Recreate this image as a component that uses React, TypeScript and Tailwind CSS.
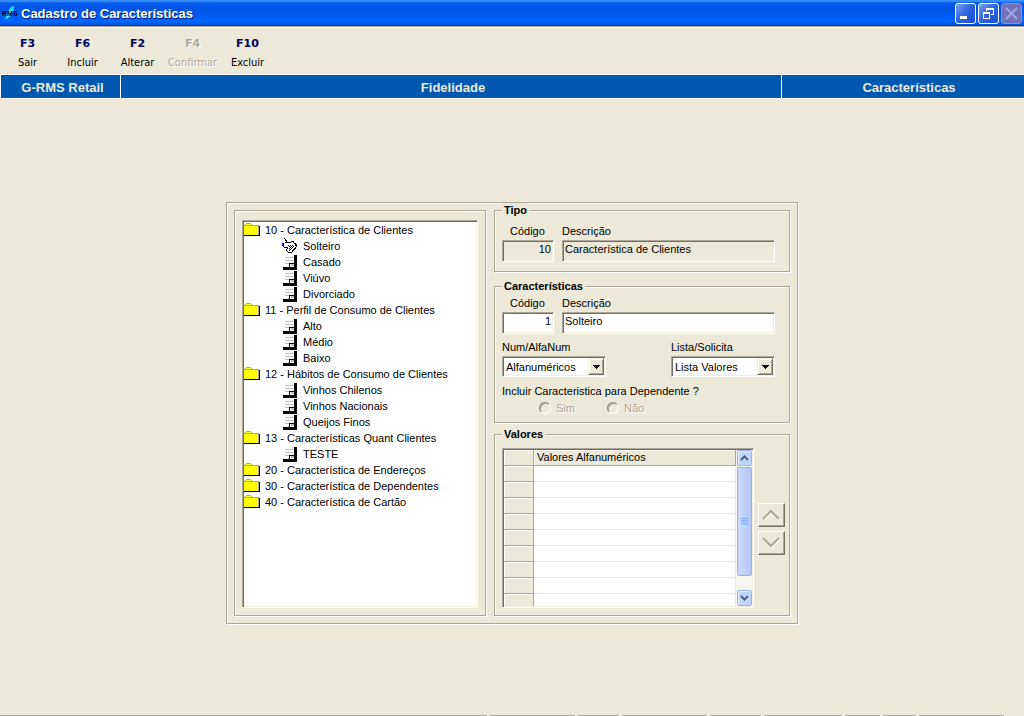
import type { ReactNode } from "react";

type Action = { key: string; label: string; disabled?: boolean };

const actions: Action[] = [
  { key: "F3", label: "Sair" },
  { key: "F6", label: "Incluir" },
  { key: "F2", label: "Alterar" },
  { key: "F4", label: "Confirmar", disabled: true },
  { key: "F10", label: "Excluir" },
];

const tree = [
  { name: "10 - Característica de Clientes", items: ["Solteiro", "Casado", "Viúvo", "Divorciado"] },
  { name: "11 - Perfil de Consumo de Clientes", items: ["Alto", "Médio", "Baixo"] },
  { name: "12 - Hábitos de Consumo de Clientes", items: ["Vinhos Chilenos", "Vinhos Nacionais", "Queijos Finos"] },
  { name: "13 - Características Quant Clientes", items: ["TESTE"] },
  { name: "20 - Característica de Endereços", items: [] },
  { name: "30 - Característica de Dependentes", items: [] },
  { name: "40 - Característica de Cartão", items: [] },
];

const etched = "border border-[#aca899] shadow-[1px_1px_0_#fff,inset_1px_1px_0_#fff]";
const sunken =
  "border border-t-[#aca899] border-l-[#aca899] border-r-white border-b-white shadow-[inset_1px_1px_0_#716f64,inset_-1px_-1px_0_#f1efe2]";

function FolderIcon() {
  return (
    <svg className="h-4 w-4 shrink-0" viewBox="0 0 16 16" shapeRendering="crispEdges" aria-hidden>
      <path d="M2 1h5v1h1v1h7v10H0V3h1V2h1z" fill="#aca899" />
      <path d="M2 2h5v1H2zM0 4h14v9H0z" fill="#ffff00" />
      <path d="M0 13h15V4h1v10H0z" fill="#000" />
    </svg>
  );
}

function PageIcon() {
  return (
    <svg className="h-4 w-4 shrink-0" viewBox="0 0 16 16" shapeRendering="crispEdges" aria-hidden>
      <path d="M3 3h8v1H3zM3 6h8v1H3zM3 9h4v1H3z" fill="#c0c0c0" />
      <path d="M12 1h3v15H1v-3h6V9h5z" fill="#000" />
      <path d="M8 10h4v3H8z" fill="#fff" />
      <path d="M9 10h3v2H9z" fill="#c0c0c0" />
    </svg>
  );
}

function HandIcon() {
  return (
    <svg className="h-4 w-4 shrink-0" viewBox="0 0 16 16" shapeRendering="crispEdges" aria-hidden>
      <path d="M3 4l4 1 4-2 4 4-6 8-4-3 1-2-4-1z" fill="#fff" />
      <path
        d="M2 0l4 5M3 4l4 1 4-2 1 2 3 2-1 2-5 6-3-1-2-2 2-2-4-1M13 7l2 1-5 6"
        fill="none"
        stroke="#000"
      />
      <path
        d="M6 7h1v1H6zM8 7h1v1H8zM10 7h1v1h-1zM7 8h1v1H7zM9 8h1v1H9zM11 8h1v1h-1zM8 9h1v1H8zM10 9h1v1h-1zM7 10h1v1H7zM9 10h1v1H9zM8 11h1v1H8zM7 12h1v1H7z"
        fill="#000"
      />
      <path d="M0 5h2v4H1V8H0z" fill="#0000ff" />
    </svg>
  );
}

function LogoIcon() {
  return (
    <svg className="h-4 w-4" viewBox="0 0 16 16" aria-hidden>
      <path d="M3 15l1-5 3-6 3-3h2v4l-3 6z" fill="#18c8e8" />
      <path d="M5 13l5-9" stroke="#80ffff" fill="none" />
      <text x="0" y="11" fontSize="7" fontWeight="bold" fill="#000020">RMS</text>
    </svg>
  );
}

function Group({ title, className, children }: { title: string; className: string; children: ReactNode }) {
  return (
    <fieldset className={`${etched} ${className} min-w-0 pr-1 pl-[7px]`}>
      <legend className="h-[15px] bg-[#ece9d8] px-0.5 leading-[15px] font-bold">{title}</legend>
      {children}
    </fieldset>
  );
}

type FieldsProps = { id: string; code: string; description: string; readOnly?: boolean };

function CodeAndDescription({ id, code, description, readOnly }: FieldsProps) {
  const box = `${sunken} mt-px block h-[22px] w-full px-0.5 pb-1 outline-none ${readOnly ? "bg-[#ece9d8]" : "bg-white"}`;
  return (
    <div className="mr-2.5 flex gap-2">
      <div className="w-[52px]">
        <label htmlFor={`${id}-code`} className="block pl-2">Código</label>
        <input id={`${id}-code`} className={`${box} text-right`} defaultValue={code} readOnly={readOnly} />
      </div>
      <div className="flex-1">
        <label htmlFor={`${id}-desc`} className="block">Descrição</label>
        <input id={`${id}-desc`} className={box} defaultValue={description} readOnly={readOnly} />
      </div>
    </div>
  );
}

function Combo({ id, label, value }: { id: string; label: string; value: string }) {
  return (
    <div className="w-[104px]">
      <label htmlFor={id} className="block">{label}</label>
      <div className="relative mt-px">
        <select id={id} className={`${sunken} block h-[21px] w-full appearance-none bg-white pl-[3px] outline-none`}>
          <option>{value}</option>
        </select>
        <span className="pointer-events-none absolute top-0.5 right-0.5 flex h-[17px] w-4 items-center justify-center border border-t-[#f1efe2] border-l-[#f1efe2] border-r-[#716f64] border-b-[#716f64] bg-[#ece9d8] shadow-[inset_1px_1px_0_#fff,inset_-1px_-1px_0_#aca899]">
          <svg className="h-1 w-[7px]" viewBox="0 0 7 4" shapeRendering="crispEdges" aria-hidden>
            <path d="M0 0h7v1H6v1H5v1H4v1H3V3H2V2H1V1H0z" />
          </svg>
        </span>
      </div>
    </div>
  );
}

function Radio({ label }: { label: string }) {
  return (
    <label className="flex w-[68px] items-center gap-[5px] text-[#aca899] [text-shadow:1px_1px_0_#fff]">
      <input
        type="radio"
        name="dependente"
        disabled
        className="h-3 w-3 appearance-none rounded-full border border-t-[#8a8778] border-l-[#8a8778] border-r-white border-b-white bg-[#ece9d8] shadow-[inset_1px_1px_0_#aca899]"
      />
      {label}
    </label>
  );
}

function ScrollButton({ up }: { up?: boolean }) {
  return (
    <button
      aria-label={up ? "Rolar para cima" : "Rolar para baixo"}
      className="flex h-4 w-[15px] items-center justify-center rounded-xs border border-[#9ab4e8] bg-[#c2d5fc] shadow-[inset_1px_1px_0_#e4ecff]"
    >
      <svg className="h-[6px] w-[9px]" viewBox="0 0 9 6" aria-hidden>
        <path d={up ? "M1 5l3.5-3.5L8 5" : "M1 1l3.5 3.5L8 1"} fill="none" stroke="#4d6185" strokeWidth="2" />
      </svg>
    </button>
  );
}

function MoveButton({ up }: { up?: boolean }) {
  const d = up ? "M1 10l8-8 8 8" : "M1 1l8 8 8-8";
  return (
    <button
      aria-label={up ? "Mover para cima" : "Mover para baixo"}
      disabled
      className="flex h-6 w-[27px] items-center justify-center border border-t-white border-l-white border-r-[#716f64] border-b-[#716f64] shadow-[inset_-1px_-1px_0_#aca899]"
    >
      <svg className="h-3 w-5" viewBox="0 0 20 12" fill="none" strokeWidth="2" aria-hidden>
        <path d={d} stroke="#fff" transform="translate(1 1)" />
        <path d={d} stroke="#aca899" />
      </svg>
    </button>
  );
}

const windowButton =
  "flex h-[21px] w-[21px] items-center justify-center rounded-[3px] border border-white bg-linear-to-br from-[#7ba2f0] via-[#2f62e0] to-[#1c4fd8]";

export default function App() {
  return (
    <div className="flex min-h-screen flex-col bg-[#ece9d8] font-['Liberation_Sans',Arial,sans-serif] text-[11px] leading-4 text-black">
      <header className="flex h-[26px] items-center bg-[linear-gradient(#3a93ff_0,#2a80f8_2px,#0058ee_3px,#0054e3_10px,#005cf5_16px,#0066ff_21px,#0058e8_24px,#0038b8_26px)] px-0.5">
        <LogoIcon />
        <h1 className="ml-[3px] flex-1 pt-0.5 text-[13px] font-bold text-white [text-shadow:1px_1px_0_#0a246a]">
          Cadastro de Características
        </h1>
        <div className="flex gap-0.5">
          <button aria-label="Minimizar" className={windowButton}>
            <svg className="h-[13px] w-[13px]" viewBox="0 0 13 13" aria-hidden>
              <path d="M1 9h7v3H1z" fill="#fff" />
            </svg>
          </button>
          <button aria-label="Restaurar" className={windowButton}>
            <svg className="h-[13px] w-[13px]" viewBox="0 0 13 13" fill="#fff" shapeRendering="crispEdges" aria-hidden>
              <path d="M4 1h8v7H9V7h2V3H5v1H4z" />
              <path d="M1 5h7v7H1zM2 7v4h5V7z" fillRule="evenodd" />
            </svg>
          </button>
          <button
            aria-label="Fechar"
            disabled
            className="flex h-[21px] w-[21px] items-center justify-center rounded-[3px] border border-[#8c8cd0] bg-[#7073bc]"
          >
            <svg className="h-[13px] w-[13px]" viewBox="0 0 13 13" stroke="#a3a6dc" strokeWidth="2" aria-hidden>
              <path d="M1 1l11 11M12 1L1 12" />
            </svg>
          </button>
        </div>
      </header>

      <nav className="flex h-12 border-t border-[#aca899] pt-[9px] shadow-[inset_0_1px_0_#fff]">
        {actions.map((a) => (
          <button
            key={a.key}
            disabled={a.disabled}
            className={`flex w-[55px] flex-col items-center gap-[3px] whitespace-nowrap ${a.disabled ? "text-[#aca899] [text-shadow:1px_1px_0_#fff]" : ""}`}
          >
            <span className={`font-['DejaVu_Sans',Verdana,sans-serif] font-bold ${a.disabled ? "" : "text-[#000060]"}`}>{a.key}</span>
            <span className="font-['DejaVu_Sans_Condensed',Tahoma,sans-serif]">{a.label}</span>
          </button>
        ))}
      </nav>

      <div className="flex h-[25px] divide-x divide-white border-y border-white bg-[#0058b0] text-center text-[13px] leading-[25px] font-bold text-[#ece9d8]">
        <div className="w-[121px] border-l border-l-white pl-1">G-RMS Retail</div>
        <div className="flex-1 pl-1">Fidelidade</div>
        <div className="w-[242px] pl-3">Características</div>
      </div>

      <main className={`${etched} mx-auto mt-[103px] flex w-[572px] gap-2 p-[7px]`}>
        <section className={`${etched} flex w-[252px] shrink-0 px-[7px] pt-[9px] pb-[7px]`}>
          <ul className={`${sunken} flex-1 bg-white p-px`}>
            {tree.map((folder, f) => (
              <li key={folder.name}>
                <div className="flex gap-[5px]">
                  <FolderIcon />
                  {folder.name}
                </div>
                <ul className="pl-[38px]">
                  {folder.items.map((item, i) => (
                    <li key={item} className="flex gap-[5px]">
                      {f === 0 && i === 0 ? <HandIcon /> : <PageIcon />}
                      {item}
                    </li>
                  ))}
                </ul>
              </li>
            ))}
          </ul>
        </section>

        <div className="-mt-[7px] flex min-w-0 flex-1 flex-col">
          <Group title="Tipo" className="pt-[5px] pb-[9px]">
            <CodeAndDescription id="tipo" code="10" description="Característica de Clientes" readOnly />
          </Group>

          <Group title="Características" className="mt-[7px] pt-px pb-[6px]">
            <CodeAndDescription id="carac" code="1" description="Solteiro" />
            <div className="mt-[5px] mr-2.5 flex justify-between">
              <Combo id="tipo-valor" label="Num/AlfaNum" value="Alfanuméricos" />
              <Combo id="lista" label="Lista/Solicita" value="Lista Valores" />
            </div>
            <div role="radiogroup" aria-labelledby="dependente-label" className="mt-[6px]">
              <p id="dependente-label">Incluir Caracteristica para Dependente ?</p>
              <div className="mt-px flex pl-[37px]">
                <Radio label="Sim" />
                <Radio label="Não" />
              </div>
            </div>
          </Group>

          <Group title="Valores" className="mt-1 pt-[6px] pb-[7px]">
            <div className="flex items-center gap-1">
              <div className={`${sunken} flex h-40 w-[252px] overflow-hidden bg-white p-px`}>
                <div className="h-full flex-1 overflow-hidden">
                  <table className="w-full table-fixed border-separate border-spacing-0">
                    <thead>
                      <tr className="h-4 bg-[#ece9d8] text-left">
                        <td className="w-[30px] border-r border-b border-[#aca899] shadow-[inset_1px_1px_0_#fff]" />
                        <th className="h-4 border-r border-b border-[#aca899] pl-[3px] leading-[15px] font-normal shadow-[inset_1px_1px_0_#fff]">
                          Valores Alfanuméricos
                        </th>
                      </tr>
                    </thead>
                    <tbody>
                      {Array.from({ length: 9 }, (_, i) => (
                        <tr key={i} className="h-4">
                          <td className="h-4 border-r border-b border-[#aca899] bg-[#ece9d8] shadow-[inset_1px_1px_0_#fff]" />
                          <td className="h-4 border-r border-b border-[#ece9d8]" />
                        </tr>
                      ))}
                    </tbody>
                  </table>
                </div>
                <div className="flex w-4 flex-col items-center bg-[#f6f5ee]">
                  <ScrollButton up />
                  <div className="mt-px flex h-[109px] w-[15px] items-center justify-center rounded-xs border border-[#9ab4e8] bg-linear-to-r from-[#cbdafd] to-[#b4c8f8]">
                    <svg className="h-2 w-[7px]" viewBox="0 0 7 8" stroke="#8cb0f8" shapeRendering="crispEdges" aria-hidden>
                      <path d="M0 .5h7M0 2.5h7M0 4.5h7M0 6.5h7" />
                    </svg>
                  </div>
                  <div className="flex-1" />
                  <ScrollButton />
                </div>
              </div>
              <div className="flex flex-col gap-1 pt-0.5">
                <MoveButton up />
                <MoveButton />
              </div>
            </div>
          </Group>
        </div>
      </main>

      {/* status bar: only its top edge shows */}
      <footer className="mt-auto flex h-px gap-0.5 pr-[19px]">
        <div className="flex-1 border-r border-white bg-[#aca899]" />
        <div className="w-[86px] border-r border-white bg-[#aca899]" />
        <div className="w-[42px] border-r border-white bg-[#aca899]" />
        <div className="w-[86px] border-r border-white bg-[#aca899]" />
        <div className="w-[52px] border-r border-white bg-[#aca899]" />
        <div className="w-[79px] border-r border-white bg-[#aca899]" />
        <div className="w-[36px] border-r border-white bg-[#aca899]" />
        <div className="w-[34px] border-r border-white bg-[#aca899]" />
        <div className="w-[86px] border-r border-white bg-[#aca899]" />
      </footer>
    </div>
  );
}
